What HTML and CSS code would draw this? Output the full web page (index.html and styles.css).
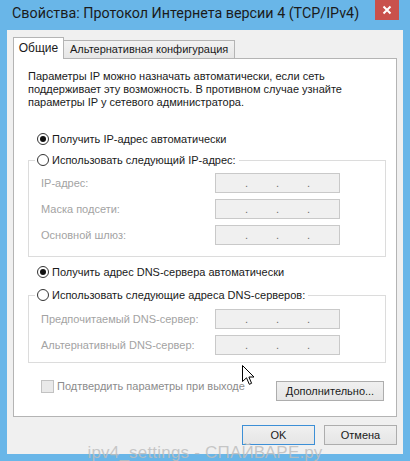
FILE: index.html
```html
<!DOCTYPE html>
<html lang="ru">
<head>
<meta charset="utf-8">
<title>Свойства: Протокол Интернета версии 4 (TCP/IPv4)</title>
<link rel="stylesheet" href="styles.css">
</head>
<body>
<div class="window">
  <div class="titlebar">
    <span class="title">Свойства: Протокол Интернета версии 4 (TCP/IPv4)</span>
    <div class="close">
      <svg width="10" height="10" viewBox="0 0 10 10"><path d="M1.5 1.5 L8.5 8.5 M8.5 1.5 L1.5 8.5" stroke="#fff" stroke-width="2" fill="none"/></svg>
    </div>
  </div>
  <div class="client">
    <div class="tabs">
      <div class="tab active">Общие</div>
      <div class="tab">Альтернативная конфигурация</div>
    </div>
    <div class="panel">
      <p class="desc">Параметры IP можно назначать автоматически, если сеть поддерживает эту возможность. В противном случае узнайте параметры IP у сетевого администратора.</p>

      <div class="radio-row first"><span class="radio checked"></span><span>Получить IP-адрес автоматически</span></div>
      <fieldset class="group ip-group">
        <legend class="radio-row"><span class="radio"></span><span>Использовать следующий IP-адрес:</span></legend>
        <div class="fields">
          <div class="field"><span class="label">IP-адрес:</span><div class="ip"><span class="dot">.</span><span class="dot">.</span><span class="dot">.</span></div></div>
          <div class="field"><span class="label">Маска подсети:</span><div class="ip"><span class="dot">.</span><span class="dot">.</span><span class="dot">.</span></div></div>
          <div class="field"><span class="label">Основной шлюз:</span><div class="ip"><span class="dot">.</span><span class="dot">.</span><span class="dot">.</span></div></div>
        </div>
      </fieldset>

      <div class="radio-row second"><span class="radio checked"></span><span>Получить адрес DNS-сервера автоматически</span></div>
      <fieldset class="group dns-group">
        <legend class="radio-row"><span class="radio"></span><span>Использовать следующие адреса DNS-серверов:</span></legend>
        <div class="fields">
          <div class="field"><span class="label">Предпочитаемый DNS-сервер:</span><div class="ip"><span class="dot">.</span><span class="dot">.</span><span class="dot">.</span></div></div>
          <div class="field"><span class="label">Альтернативный DNS-сервер:</span><div class="ip"><span class="dot">.</span><span class="dot">.</span><span class="dot">.</span></div></div>
        </div>
      </fieldset>

      <div class="bottom-row">
        <div class="check-row"><span class="checkbox"></span><span>Подтвердить параметры при выходе</span></div>
        <div class="btn advanced">Дополнительно...</div>
      </div>
    </div>
    <div class="buttons">
      <div class="btn ok">OK</div>
      <div class="btn">Отмена</div>
    </div>
  </div>
  <div class="watermark">ipv4_settings - СПАЙВАРЕ.ру</div>
  <svg class="cursor" width="13" height="21" viewBox="0 0 13 21"><path d="M0.5 0.5 L0.5 16.5 L4.5 12.8 L7.3 19.3 L9.6 18.3 L6.9 12 L12 12 Z" fill="#fff" stroke="#000" stroke-width="1" stroke-linejoin="miter"/></svg>
</div>
</body>
</html>
```
FILE: styles.css
```css
* { box-sizing: border-box; }
html, body { margin: 0; padding: 0; }
body {
  width: 410px;
  height: 461px;
  overflow: hidden;
  font-family: "Liberation Sans", Arial, sans-serif;
  font-size: 11px;
  color: #1a1a1a;
}
.window {
  position: relative;
  width: 410px;
  height: 461px;
  background: #69b6e8;
  display: flex;
  flex-direction: column;
}
.titlebar {
  height: 30px;
  display: flex;
  align-items: flex-start;
}
.title {
  padding-left: 12px;
  font-family: Roboto, "Liberation Sans", sans-serif;
  font-size: 14.3px;
  line-height: 27px;
  color: #1b1b1b;
  white-space: nowrap;
}
.close {
  margin-left: auto;
  margin-right: 11px;
  width: 24px;
  height: 20px;
  background: #c9514c;
  display: flex;
  align-items: center;
  justify-content: center;
}
.client {
  margin: 0 7px;
  height: 424px;
  background: #f0f0f0;
  padding: 7px 6px 0 6px;
}
.tabs {
  height: 21px;
  display: flex;
  align-items: flex-end;
}
.tab {
  height: 18px;
  padding: 0 6px;
  border: 1px solid #b4b4b4;
  border-bottom: none;
  background: linear-gradient(#f2f2f2, #e6e6e6);
  line-height: 17px;
  white-space: nowrap;
  margin-left: -1px;
}
.tab.active {
  height: 22px;
  width: 51px;
  margin-left: 0;
  margin-bottom: -1px;
  background: #fff;
  position: relative;
  z-index: 1;
  text-align: center;
  padding: 0;
  line-height: 21px;
  font-size: 12px;
}
.panel {
  height: 359px;
  background: #fff;
  border: 1px solid #b4b4b4;
  padding: 11px 10px 0 14px;
}
.desc {
  margin: 0;
  line-height: 13px;
  width: 330px;
}
.radio-row {
  display: flex;
  align-items: center;
  height: 16px;
  padding-left: 9px;
  white-space: nowrap;
}
.radio-row.first { margin-top: 22px; }
.radio-row.second { margin-top: 7px; }
.radio {
  width: 12px;
  height: 12px;
  border-radius: 50%;
  border: 1px solid #333;
  background: #fff;
  margin-right: 3px;
  flex: none;
  position: relative;
}
.radio.checked::after {
  content: "";
  position: absolute;
  left: 2px;
  top: 2px;
  width: 6px;
  height: 6px;
  border-radius: 50%;
  background: #111;
}
.group {
  margin: 5px 0 0 0;
  padding: 0;
  border: 1px solid #dcdcdc;
  min-width: 0;
}
.group legend.radio-row {
  padding: 0 3px 0 2px;
  margin-left: 6px;
  background: #fff;
}
.dns-group { margin-top: 7px; }
.fields {
  padding: 5px 0 11px 12px;
  display: flex;
  flex-direction: column;
  gap: 6px;
}
.dns-group .fields { padding-top: 6px; padding-bottom: 7px; }
.field {
  display: flex;
  align-items: center;
  height: 20px;
}
.label {
  width: 174px;
  color: #a3a3a3;
}
.ip {
  width: 125px;
  height: 20px;
  border: 1px solid #c9c9c9;
  background: #f0f0f0;
  display: flex;
  align-items: center;
  color: #6f6f6f;
}
.dot {
  width: 31px;
  text-align: right;
  line-height: 18px;
}
.dot:first-child { width: 32px; }
.bottom-row {
  margin-top: 16px;
  display: flex;
  align-items: flex-start;
  justify-content: space-between;
  padding-right: 2px;
}
.check-row {
  display: flex;
  align-items: center;
  height: 14px;
  padding-left: 13px;
  color: #8c8c8c;
  white-space: nowrap;
}
.checkbox {
  width: 13px;
  height: 13px;
  border: 1px solid #c2c2c2;
  background: #e9e9e9;
  margin-right: 3px;
}
.btn {
  height: 20px;
  border: 1px solid #adadad;
  background: linear-gradient(#f0f0f0, #e5e5e5);
  text-align: center;
  line-height: 18px;
  color: #1a1a1a;
}
.btn.advanced {
  width: 108px;
  margin-top: 2px;
}
.buttons {
  margin-top: 8px;
  display: flex;
  justify-content: flex-end;
  gap: 9px;
}
.buttons .btn { width: 73px; }
.btn.ok {
  border-color: #3c8fd6;
}
.watermark {
  position: absolute;
  left: 0;
  right: 0;
  top: 443px;
  text-align: center;
  font-family: "Liberation Sans", sans-serif;
  font-size: 17px;
  color: rgba(190, 190, 190, 0.85);
  letter-spacing: 0.2px;
  white-space: nowrap;
}
.cursor {
  position: absolute;
  left: 242px;
  top: 365px;
}
```
